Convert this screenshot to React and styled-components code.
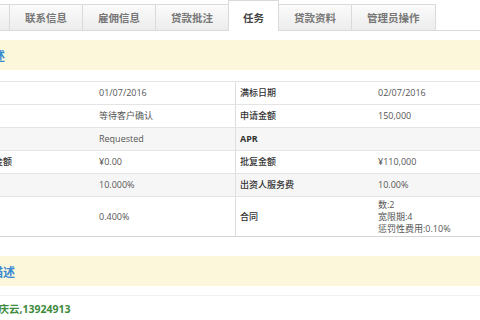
import React from "react";
import styled, { createGlobalStyle } from "styled-components";

const GlobalStyle = createGlobalStyle`
  html, body {
    margin: 0;
    padding: 0;
    background: #fff;
    overflow: hidden;
  }
  body {
    font-family: "Open Sans", "Noto Sans CJK SC", sans-serif;
    color: #555;
  }
`;

const Page = styled.div`
  width: 480px;
  height: 320px;
  overflow: hidden;
`;

const TabBar = styled.div`
  display: flex;
  align-items: flex-end;
  height: 31px;
  box-sizing: border-box;
  border-bottom: 1px solid #dadada;
  margin-left: -64px;
`;

const Tab = styled.div`
  display: flex;
  align-items: center;
  justify-content: center;
  box-sizing: border-box;
  height: ${(p) => (p.$active ? "31px" : "26px")};
  margin-bottom: ${(p) => (p.$active ? "-1px" : "0")};
  padding: ${(p) => (p.$active ? "3px 14px 0" : "0 15px")};
  margin-right: -1px;
  border: 1px solid #dadada;
  border-bottom: none;
  background: ${(p) =>
    p.$active ? "#fff" : "linear-gradient(#fbfbfb, #ececec)"};
  color: ${(p) => (p.$active ? "#444" : "#777")};
  font-family: "Noto Sans CJK SC", sans-serif;
  font-size: 10.5px;
  font-weight: bold;
  white-space: nowrap;
`;

const SectionBar = styled.div`
  display: flex;
  align-items: center;
  height: 30px;
  margin-top: ${(p) => p.$top}px;
  background: #fcf6da;
`;

const SectionTitle = styled.h3`
  margin: 0 0 0 ${(p) => p.$indent}px;
  font-family: "Noto Sans CJK SC", sans-serif;
  font-size: 12px;
  font-weight: bold;
  color: #3a8ad2;
  white-space: nowrap;
`;

const InfoTable = styled.div`
  display: flex;
  flex-direction: column;
  margin: 11px 0 0 -46px;
  border-top: 1px solid #e4e4e4;
  border-bottom: 1px solid #d6d6d6;
`;

const Row = styled.div`
  display: grid;
  grid-template-columns: 141px 140px 139px 1fr;
  min-height: ${(p) => (p.$tall ? "39px" : "22px")};
  background: ${(p) => (p.$striped ? "#f6f6f6" : "#fff")};
  & + & {
    border-top: 1px solid #e4e4e4;
  }
`;

const Cell = styled.div`
  display: flex;
  flex-direction: column;
  justify-content: center;
  padding: 0 4px;
  font-size: 9px;
  line-height: 12px;
  white-space: nowrap;
  color: ${(p) => (p.$label ? "#333" : "#555")};
  font-weight: ${(p) => (p.$label ? 500 : 400)};
  border-left: ${(p) => (p.$divider ? "1px solid #dedede" : "none")};
  & b {
    font-weight: 700;
  }
`;

const Footer = styled.div`
  margin-top: 9px;
  border-top: 1px solid #f1f1f1;
  padding-top: 6px;
`;

const Contact = styled.div`
  margin-left: -12px;
  font-size: 10.5px;
  line-height: 14px;
  font-weight: bold;
  color: #3d8b3d;
  white-space: nowrap;
`;

const tabs = ["基本信息", "联系信息", "雇佣信息", "贷款批注", "任务", "贷款资料", "管理员操作"];

const rows = [
  { l1: "发布日期", v1: "01/07/2016", l2: "满标日期", v2: ["02/07/2016"] },
  { l1: "贷款状态", v1: "等待客户确认", l2: "申请金额", v2: ["150,000"] },
  { l1: "审核状态", v1: "Requested", l2: <b>APR</b>, key: "APR", v2: [""], striped: true },
  { l1: "剩余应还金额", v1: "¥0.00", l2: "批复金额", v2: ["¥110,000"] },
  { l1: "年利率", v1: "10.000%", l2: "出资人服务费", v2: ["10.00%"], striped: true },
  { l1: "服务费率", v1: "0.400%", l2: "合同", v2: ["数:2", "宽限期:4", "惩罚性费用:0.10%"], tall: true },
];

export default function App() {
  return (
    <Page>
      <GlobalStyle />
      <TabBar>
        {tabs.map((t) => (
          <Tab key={t} $active={t === "任务"}>
            {t}
          </Tab>
        ))}
      </TabBar>

      <SectionBar $top={9}>
        <SectionTitle $indent={-43}>任务概述</SectionTitle>
      </SectionBar>

      <InfoTable>
        {rows.map((r) => (
          <Row key={r.key || r.l2} $striped={r.striped} $tall={r.tall}>
            <Cell $label>{r.l1}</Cell>
            <Cell>{r.v1}</Cell>
            <Cell $label $divider>{r.l2}</Cell>
            <Cell>
              {r.v2.map((line, i) => (
                <span key={i}>{line}</span>
              ))}
            </Cell>
          </Row>
        ))}
      </InfoTable>

      <SectionBar $top={19}>
        <SectionTitle $indent={-33}>贷款描述</SectionTitle>
      </SectionBar>

      <Footer>
        <Contact>黄庆云,13924913</Contact>
      </Footer>
    </Page>
  );
}
